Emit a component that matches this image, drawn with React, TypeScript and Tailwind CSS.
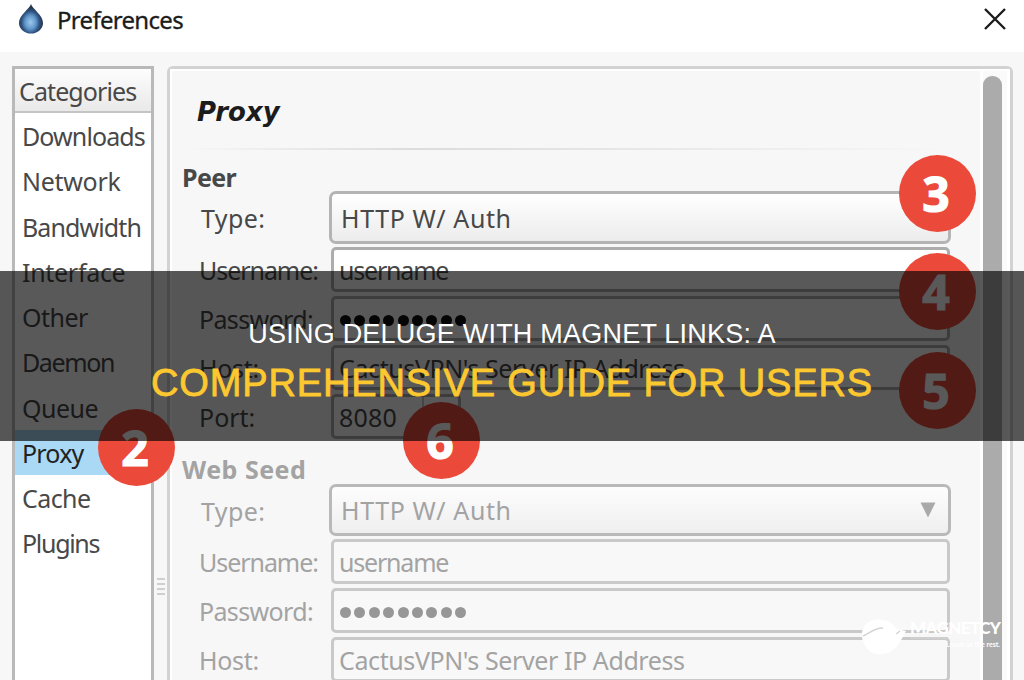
import clsx from 'clsx';
import type { ReactNode } from 'react';

interface FieldProps {
  label: string;
  labelClass: string;
  disabled?: boolean;
  children: ReactNode;
}

const categories = [
  { name: 'Downloads', spacing: 'tracking-[-0.9px]' },
  { name: 'Network', spacing: 'tracking-[-0.3px]' },
  { name: 'Bandwidth', spacing: 'tracking-[-0.9px]' },
  { name: 'Interface', spacing: 'tracking-[-0.3px]' },
  { name: 'Other', spacing: 'tracking-[-0.5px]' },
  { name: 'Daemon', spacing: 'tracking-[-1.4px]' },
  { name: 'Queue', spacing: 'tracking-[-0.5px]' },
  { name: 'Proxy', spacing: 'tracking-[-0.8px]' },
  { name: 'Cache', spacing: 'tracking-[-0.6px]' },
  { name: 'Plugins', spacing: 'tracking-[-1.3px]' },
];

const steps = [
  { value: 2, place: 'left-[98px] top-[409px]' },
  { value: 3, place: 'left-[899px] top-[155px]' },
  { value: 4, place: 'left-[899px] top-[253px]' },
  { value: 5, place: 'left-[899px] top-[352px]' },
  { value: 6, place: 'left-[403px] top-[402px]' },
];

const DropIcon = () => (
  <svg viewBox="0 0 28 32" className="h-8 w-7">
    <defs>
      <radialGradient id="drop" cx="0.48" cy="0.62" r="0.5">
        <stop offset="0" stopColor="#9cc8ee" />
        <stop offset="0.45" stopColor="#6298cc" />
        <stop offset="0.75" stopColor="#2f5482" />
        <stop offset="1" stopColor="#25364f" />
      </radialGradient>
    </defs>
    <path d="M14 1C15.5 6 26 12 26 20A12 10.500 0 0 1 2 20C2 12 12.500 6 14 1Z" fill="url(#drop)" />
  </svg>
);

const TextField = ({ label, labelClass, disabled, children }: FieldProps) => (
  <div className="flex h-[45px] shrink-0 items-stretch">
    <div className={clsx('w-[149px] pl-[17px] leading-[47px]', labelClass)}>{label}</div>
    <div
      className={clsx(
        'flex w-[619px] items-center rounded-[5px] border-[3px] pt-0.5 pl-[5px]',
        disabled ? 'border-[#c9c9c9] bg-[#f8f8f8]' : 'border-[#adadad] bg-white',
      )}
    >
      {children}
    </div>
  </div>
);

const SelectField = ({ disabled }: { disabled?: boolean }) => (
  <div className={clsx('mb-[3px] flex shrink-0', disabled ? 'h-[52px]' : 'h-[53px]')}>
    <div className={clsx('w-[147px] pl-[19px] tracking-[0.4px]', disabled ? 'leading-[54px]' : 'leading-[55px]')}>
      Type:
    </div>
    <div
      className={clsx(
        'flex w-[622px] items-center justify-between rounded-[7px] border-[3px] bg-linear-to-b pr-[12px] pl-[9px]',
        disabled ? 'border-[#b9b9b9] from-[#fdfdfd] to-[#efefef]' : 'border-[#b4b4b4] from-white to-[#ececec]',
      )}
    >
      <span className="pt-0.5 tracking-[0.6px]">HTTP W/ Auth</span>
      {disabled && (
        <svg viewBox="0 0 16 16" className="size-4">
          <path d="M0.500 0.500H15.500L8 15.500Z" fill="#a9a9a9" />
        </svg>
      )}
    </div>
  </div>
);

const Dots = ({ className }: { className: string }) => (
  <div className="flex gap-[3.400px] pt-0.5 pl-px">
    {Array.from({ length: 9 }, (_, i) => (
      <span key={i} className={clsx('size-[11px] rounded-full', className)} />
    ))}
  </div>
);

const ProxyFields = ({ disabled }: { disabled?: boolean }) => (
  <div className={disabled ? 'text-[#a3a3a3]' : 'text-[#484848]'}>
    <SelectField disabled={disabled} />
    <div className="flex flex-col gap-1">
      <TextField label="Username:" labelClass="tracking-[-1.05px]" disabled={disabled}>
        <span className="tracking-[-1.2px]">username</span>
      </TextField>
      <TextField label="Password:" labelClass="tracking-[-0.65px]" disabled={disabled}>
        <Dots className={disabled ? 'bg-[#979797]' : 'bg-[#111]'} />
      </TextField>
      <TextField label="Host:" labelClass="tracking-[-0.3px]" disabled={disabled}>
        <span className="tracking-[-0.4px]">CactusVPN's Server IP Address</span>
      </TextField>
    </div>
  </div>
);

const Sidebar = () => (
  <aside className="w-[142px] shrink-0 border-[3px] border-b-0 border-[#b9b9b9] bg-white text-[#484848]">
    <div className="h-11 border-b-2 border-[#c4c4c4] bg-linear-to-b from-[#fdfdfd] to-[#e9e9e9] pl-1 leading-[45px] tracking-[-0.9px]">
      Categories
    </div>
    <ul>
      {categories.map(({ name, spacing }) => (
        <li
          key={name}
          className={clsx('h-[45.25px] pl-[7px] leading-[46px]', spacing, name === 'Proxy' && 'bg-[#a9d9f5] text-[#222]')}
        >
          {name}
        </li>
      ))}
    </ul>
  </aside>
);

const Grip = () => (
  <div className="flex w-[13px] shrink-0 flex-col items-center gap-[3px] pt-[512px]">
    <i className="h-[2px] w-2 bg-[#cfcfcf]" />
    <i className="h-[2px] w-2 bg-[#cfcfcf]" />
    <i className="h-[2px] w-2 bg-[#cfcfcf]" />
    <i className="h-[2px] w-2 bg-[#cfcfcf]" />
  </div>
);

const ProxyPanel = () => (
  <main className="flex w-[846px] shrink-0 rounded-t-[6px] border-[3px] border-b-0 border-[#d2d2d2]">
    <div className="flex w-[810px] shrink-0 flex-col border-t-2 border-l-2 border-white pl-[10px]">
      <h1 className="h-[77px] shrink-0 pt-[25px] pl-[15px] font-['DejaVu_Sans',sans-serif] text-[26px] leading-8 font-bold text-[#1c1c1c] italic">
        Proxy
      </h1>
      <div className="h-[2px] w-[770px] shrink-0 bg-linear-to-r from-transparent via-[#dcdcdc] via-30% to-transparent" />
      <h2 className="h-[41px] shrink-0 pt-[13px] leading-7 font-bold tracking-[-0.6px] text-[#484848]">Peer</h2>
      <ProxyFields />
      <div className="mt-1 flex h-[45px] shrink-0 text-[#484848]">
        <div className="w-[149px] pl-[17px] leading-[47px]">Port:</div>
        <div className="flex w-[130px] items-center rounded-[5px] border-[3px] border-[#adadad] bg-white pl-[5px]">
          <span className="w-[83px] pt-0.5 tracking-[0.2px]">8080</span>
          <div className="flex h-full flex-1 items-start justify-center border-l-2 border-[#c6c6c6] pt-1">
            <svg viewBox="0 0 14 9" className="h-[9px] w-[14px]">
              <path d="M1 8L7 1L13 8Z" fill="#777" />
            </svg>
          </div>
        </div>
      </div>
      <h2 className="h-[45px] shrink-0 pt-4 leading-7 font-bold tracking-[0.5px] text-[#a3a3a3]">Web Seed</h2>
      <ProxyFields disabled />
    </div>
    <div className="flex flex-1 border-x-[3px] border-t-2 border-white bg-[#fafafa] pt-[5px]">
      <div className="w-[19px] rounded-t-[9px] bg-[#ababab]" />
    </div>
  </main>
);

const Watermark = () => (
  <div className="absolute top-[618px] left-[861px] flex gap-[3px] font-[Lato,sans-serif] text-white">
    <svg viewBox="0 0 46 38" className="h-[38px] w-[46px]">
      <path d="M1 14C3 4 12 0 22 2C29 3 34 7 35 11L45 13C42 19 40 22 37 27C32 34 24 37 15 36C6 34 0 24 1 14Z" fill="#fff" />
      <path d="M2 18C8 16 12 10 22 10M35 16L39 13" fill="none" stroke="#d4d4d4" strokeWidth="1.500" />
    </svg>
    <div className="w-[90px]">
      <div className="text-[17px] leading-[19px] font-black tracking-[-0.6px]">MAGNETCY</div>
      <div className="h-[2px] w-[38px] bg-[#cfcfcf]" />
      <div className="pt-px text-right text-[7px] leading-[9px] font-bold">Leave us the rest.</div>
    </div>
  </div>
);

const App = () => (
  <div className="relative flex h-[680px] w-[1024px] flex-col overflow-hidden bg-[#f7f7f7] font-['Noto_Sans',sans-serif] text-[25px] whitespace-nowrap">
    <header className="flex h-[52px] shrink-0 items-start bg-white pt-[3px] pr-[18px] pl-[17px] text-[#1c1c1c]">
      <DropIcon />
      <span className="flex-1 pl-3 text-[24px] leading-[34px] tracking-[-0.7px] [-webkit-text-stroke:0.3px_#1c1c1c]">
        Preferences
      </span>
      <svg viewBox="0 0 22 22" className="mt-[5px] size-[22px]">
        <path d="M1 1L21 21M21 1L1 21" stroke="#1c1c1c" strokeWidth="2.400" />
      </svg>
    </header>

    <div className="flex h-[628px] shrink-0 pt-[14px] pl-3">
      <Sidebar />
      <Grip />
      <ProxyPanel />
    </div>

    {/* STEP BADGES */}
    {steps.map(({ value, place }) => (
      <div
        key={value}
        className={clsx(
          "absolute flex size-[77px] items-center justify-center rounded-full bg-[#eb4a3b] pr-[3px] font-['Open_Sans',sans-serif] text-[48px] leading-none font-bold text-white [-webkit-text-stroke:1.2px_#fff]",
          place,
        )}
      >
        {value}
      </div>
    ))}

    <Watermark />

    {/* TITLE BANNER */}
    <div className="absolute top-[271px] left-0 flex h-[170px] w-full flex-col items-center bg-black/65 pt-[46px] font-['Liberation_Sans',sans-serif]">
      <p className="text-[27px] leading-[34px] tracking-[0.22px] text-white">USING DELUGE WITH MAGNET LINKS: A</p>
      <p className="pt-[10px] text-[38px] leading-[44px] tracking-[0.87px] text-[#fdc82f] [-webkit-text-stroke:0.8px_#fdc82f]">
        COMPREHENSIVE GUIDE FOR USERS
      </p>
    </div>
  </div>
);

export default App;
